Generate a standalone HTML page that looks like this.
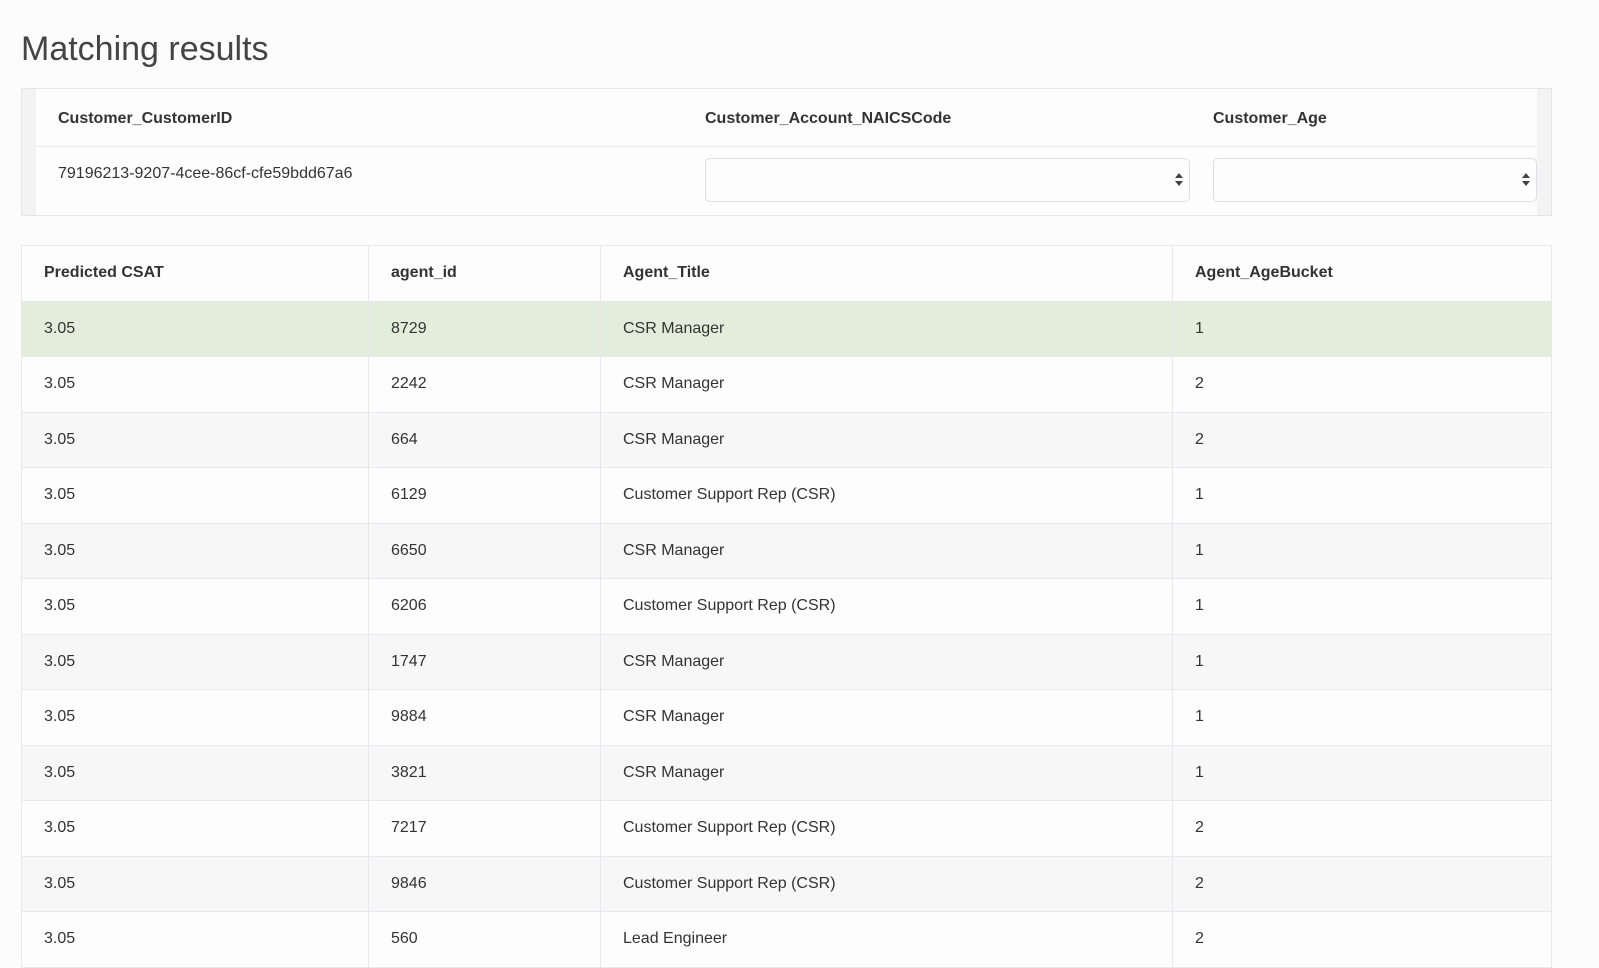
<!DOCTYPE html>
<html><head><style>
body{margin:0;background:#fcfcfc;font-family:"Liberation Sans",Arial,sans-serif;color:#333;width:1599px;height:966px;overflow:hidden;position:relative}
h1{position:absolute;left:21px;top:30px;margin:0;font-weight:normal;font-size:34px;color:#444}
.box{position:absolute;left:21px;top:88px;width:1529px;height:126px;border:1px solid #e3e5e8;background:#f3f3f3}
.inner{position:absolute;left:14px;right:14px;top:0;bottom:0;background:#fdfdfd}
.hd{position:absolute;top:0;height:57px;border-bottom:1px solid #e8eaed;left:0;right:0}
.b{position:absolute;font-weight:bold;font-size:16px;color:#333}
.sel{position:absolute;top:69px;height:42px;border:1px solid #dcdfe3;border-radius:5px;background:#fdfdfd}
.sel:after{content:"";position:absolute;right:6px;top:14px;width:0;height:0;border-left:4px solid transparent;border-right:4px solid transparent;border-bottom:5px solid #444}
.sel:before{content:"";position:absolute;right:6px;top:22px;width:0;height:0;border-left:4px solid transparent;border-right:4px solid transparent;border-top:5px solid #444}
table{position:absolute;left:21px;top:245px;width:1531px;border-collapse:collapse;font-size:16px}
td,th{border:1px solid #e6e8eb;padding:0 0 0 22px;height:54.5px;text-align:left;color:#333}
th{font-weight:bold;background:#fdfdfd}
tr:nth-child(odd) td{background:#f7f7f7}
tr:nth-child(even) td{background:#fdfdfd}
tr.g td{background:#e2eedb}
</style></head><body>
<h1>Matching results</h1>
<div class="box"><div class="inner">
<div class="hd"></div>
<div class="b" style="left:22px;top:21px">Customer_CustomerID</div>
<div class="b" style="left:669px;top:21px">Customer_Account_NAICSCode</div>
<div class="b" style="left:1177px;top:21px">Customer_Age</div>
<div style="position:absolute;left:22px;top:76px;font-size:16px">79196213-9207-4cee-86cf-cfe59bdd67a6</div>
<div class="sel" style="left:669px;width:483px"></div>
<div class="sel" style="left:1177px;width:322px"></div>
</div></div>
<table>
<thead><tr><th style="width:324px">Predicted CSAT</th><th style="width:209px">agent_id</th><th style="width:549px">Agent_Title</th><th>Agent_AgeBucket</th></tr></thead>
<tbody>
<tr class="g"><td>3.05</td><td>8729</td><td>CSR Manager</td><td>1</td></tr>
<tr><td>3.05</td><td>2242</td><td>CSR Manager</td><td>2</td></tr>
<tr><td>3.05</td><td>664</td><td>CSR Manager</td><td>2</td></tr>
<tr><td>3.05</td><td>6129</td><td>Customer Support Rep (CSR)</td><td>1</td></tr>
<tr><td>3.05</td><td>6650</td><td>CSR Manager</td><td>1</td></tr>
<tr><td>3.05</td><td>6206</td><td>Customer Support Rep (CSR)</td><td>1</td></tr>
<tr><td>3.05</td><td>1747</td><td>CSR Manager</td><td>1</td></tr>
<tr><td>3.05</td><td>9884</td><td>CSR Manager</td><td>1</td></tr>
<tr><td>3.05</td><td>3821</td><td>CSR Manager</td><td>1</td></tr>
<tr><td>3.05</td><td>7217</td><td>Customer Support Rep (CSR)</td><td>2</td></tr>
<tr><td>3.05</td><td>9846</td><td>Customer Support Rep (CSR)</td><td>2</td></tr>
<tr><td>3.05</td><td>560</td><td>Lead Engineer</td><td>2</td></tr>
</tbody></table>
</body></html>
